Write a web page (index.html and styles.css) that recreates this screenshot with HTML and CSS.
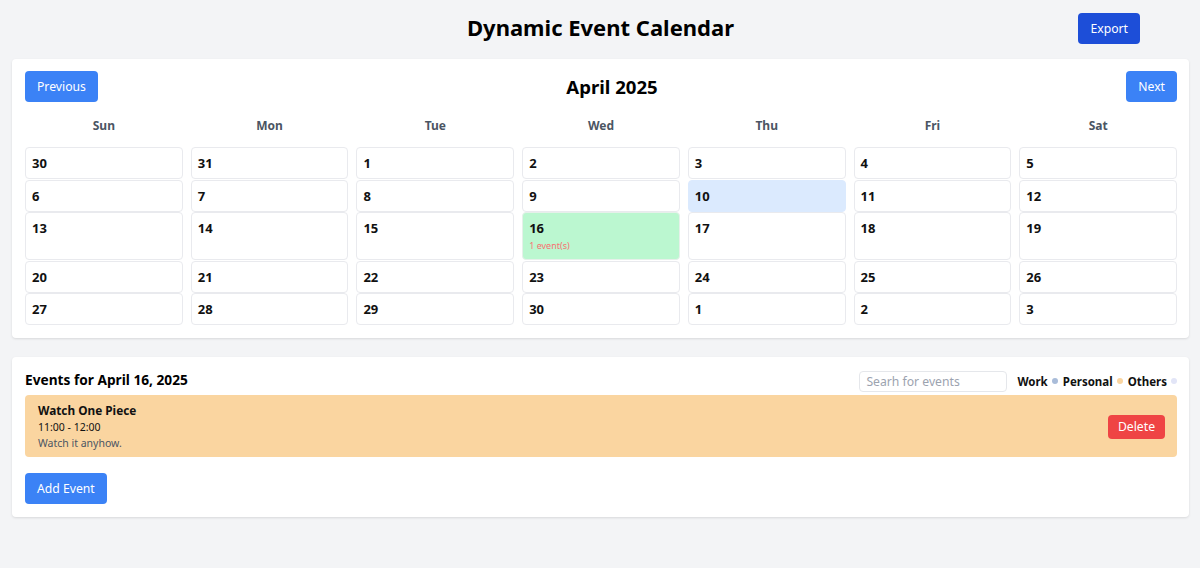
FILE: index.html
```html
<!DOCTYPE html>
<html lang="en">
<head>
<meta charset="utf-8">
<title>Dynamic Event Calendar</title>
<link rel="stylesheet" href="styles.css">
</head>
<body>
<div class="page">
  <header class="top">
    <div></div>
    <h1 class="title">Dynamic Event Calendar</h1>
    <div class="top-right"><button class="btn btn-dark">Export</button></div>
  </header>

  <section class="card calendar">
    <div class="nav">
      <button class="btn btn-blue">Previous</button>
      <h2 class="month">April 2025</h2>
      <button class="btn btn-blue">Next</button>
    </div>
    <div class="weekdays">
      <div>Sun</div><div>Mon</div><div>Tue</div><div>Wed</div><div>Thu</div><div>Fri</div><div>Sat</div>
    </div>
    <div class="days">
      <div class="day">30</div><div class="day">31</div><div class="day">1</div><div class="day">2</div><div class="day">3</div><div class="day">4</div><div class="day">5</div>
      <div class="day">6</div><div class="day">7</div><div class="day">8</div><div class="day">9</div><div class="day today">10</div><div class="day">11</div><div class="day">12</div>
      <div class="day">13</div><div class="day">14</div><div class="day">15</div><div class="day selected">16<div class="count">1 event(s)</div></div><div class="day">17</div><div class="day">18</div><div class="day">19</div>
      <div class="day">20</div><div class="day">21</div><div class="day">22</div><div class="day">23</div><div class="day">24</div><div class="day">25</div><div class="day">26</div>
      <div class="day">27</div><div class="day">28</div><div class="day">29</div><div class="day">30</div><div class="day">1</div><div class="day">2</div><div class="day">3</div>
    </div>
  </section>

  <section class="card events">
    <div class="events-head">
      <h3 class="events-title">Events for April 16, 2025</h3>
      <div class="tools">
        <input class="search" type="text" placeholder="Searh for events">
        <span class="legend">Work<span class="dot dot-work"></span></span>
        <span class="legend">Personal<span class="dot dot-personal"></span></span>
        <span class="legend">Others<span class="dot dot-others"></span></span>
      </div>
    </div>
    <div class="event">
      <div class="event-info">
        <div class="event-name">Watch One Piece</div>
        <div class="event-time">11:00 - 12:00</div>
        <div class="event-desc">Watch it anyhow.</div>
      </div>
      <button class="btn btn-red">Delete</button>
    </div>
    <button class="btn btn-blue add">Add Event</button>
  </section>
</div>
</body>
</html>
```

FILE: styles.css
```css
* { box-sizing: border-box; }
html, body { margin: 0; padding: 0; }
body {
  background: #f3f4f6;
  font-family: "Noto Sans", "Open Sans", sans-serif;
  color: #111827;
}
.page { padding: 12px 11px 12px 12px; }

.top {
  display: grid;
  grid-template-columns: 1fr auto 1fr;
  align-items: center;
  height: 32px;
  margin-bottom: 15px;
}
.title {
  margin: 0;
  font-size: 22px;
  line-height: 30px;
  padding-bottom: 2px;
  font-weight: 700;
  color: #000;
}
.top-right { display: flex; justify-content: flex-end; padding-right: 49px; }

.btn {
  font-family: inherit;
  border: none;
  border-radius: 4px;
  color: #fff;
  font-size: 12.2px;
  line-height: 21px;
  padding: 5px 12px;
  cursor: pointer;
}
.btn-blue { background: #3b82f6; }
.btn-dark { background: #1d4ed8; padding: 5px 12px; }
.btn-red { background: #ef4444; padding: 2px 10px; line-height: 20px; }

.card {
  background: #fff;
  border-radius: 4px;
  box-shadow: 0 1px 3px rgba(0,0,0,0.08), 0 1px 2px rgba(0,0,0,0.04);
  padding: 12px 12px 13px 13px;
}

.nav {
  display: flex;
  justify-content: space-between;
  align-items: center;
  margin-bottom: 12px;
}
.month { margin: 0; font-size: 18.6px; line-height: 28px; font-weight: 700; color: #000; }

.weekdays {
  display: grid;
  grid-template-columns: repeat(7, 1fr);
  column-gap: 8px;
  height: 22px;
  line-height: 24px;
  margin-bottom: 11px;
  text-align: center;
  font-size: 12px;
  font-weight: 700;
  color: #4b5563;
}

.days {
  display: grid;
  grid-template-columns: repeat(7, 1fr);
  gap: 0.6px 8px;
}
.day {
  min-height: 32px;
  border: 1px solid #e9eaee;
  border-radius: 4px;
  padding: 5px 6px;
  font-size: 13px;
  line-height: 20px;
  font-weight: 700;
  color: #111;
}
.today { background: #dbeafe; border-color: #dbeafe; }
.selected { background: #bbf7d0; border-color: #e6f0ea; }
.count {
  font-size: 9px;
  line-height: 16px;
  font-weight: 400;
  color: #f87171;
}

.events { margin-top: 19px; padding-top: 12px; }
.events-head {
  display: flex;
  justify-content: space-between;
  align-items: center;
  height: 24px;
  margin-bottom: 2px;
}
.events-title { margin: 0; font-size: 13.7px; line-height: 22px; padding-bottom: 2px; font-weight: 700; color: #000; }
.tools { display: flex; align-items: center; }
.search {
  width: 148px;
  height: 21px;
  border: 1px solid #e5e7eb;
  border-radius: 4px;
  padding: 0 6px;
  font-family: inherit;
  font-size: 12.2px;
  color: #111;
  margin-right: 10px;
  outline: none;
}
.search::placeholder { color: #9ca3af; }
.legend {
  display: flex;
  align-items: center;
  font-size: 11.5px;
  font-weight: 700;
  color: #111;
  margin-right: 5px;
}
.legend:last-child { margin-right: 0; }
.dot { width: 6px; height: 6px; border-radius: 50%; margin-left: 4px; }
.dot-work { background: #a9bcd9; }
.dot-personal { background: #fad5a0; }
.dot-others { background: #e2e5f7; }

.event {
  display: flex;
  justify-content: space-between;
  align-items: center;
  background: #fad5a0;
  border-radius: 4px;
  padding: 7px 12px 6px 13px;
}
.event-name { font-size: 11.8px; line-height: 17px; font-weight: 700; color: #111; }
.event-time { font-size: 10.5px; line-height: 16px; color: #111; }
.event-desc { font-size: 10.5px; line-height: 16px; color: #4b5563; }

.add { margin-top: 16px; }
```
